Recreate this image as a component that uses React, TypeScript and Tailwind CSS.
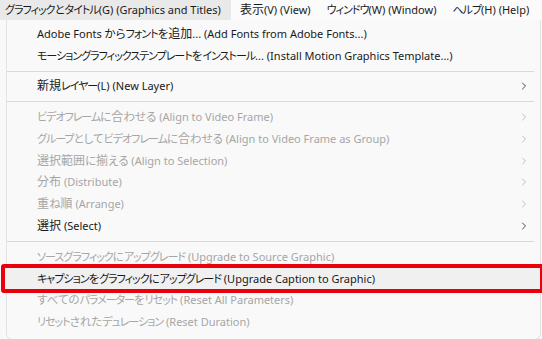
import { ChevronRight } from "lucide-react";

type Item =
  | { kind: "sep" }
  | { kind: "item"; label: string; disabled?: boolean; sub?: boolean; marked?: boolean };

const items: Item[] = [
  { kind: "item", label: "Adobe Fonts からフォントを追加... (Add Fonts from Adobe Fonts...)" },
  { kind: "item", label: "モーショングラフィックステンプレートをインストール... (Install Motion Graphics Template...)" },
  { kind: "sep" },
  { kind: "item", label: "新規レイヤー(L) (New Layer)", sub: true },
  { kind: "sep" },
  { kind: "item", label: "ビデオフレームに合わせる (Align to Video Frame)", disabled: true, sub: true },
  { kind: "item", label: "グループとしてビデオフレームに合わせる (Align to Video Frame as Group)", disabled: true, sub: true },
  { kind: "item", label: "選択範囲に揃える (Align to Selection)", disabled: true, sub: true },
  { kind: "item", label: "分布 (Distribute)", disabled: true, sub: true },
  { kind: "item", label: "重ね順 (Arrange)", disabled: true, sub: true },
  { kind: "item", label: "選択 (Select)", sub: true },
  { kind: "sep" },
  { kind: "item", label: "ソースグラフィックにアップグレード (Upgrade to Source Graphic)", disabled: true },
  { kind: "item", label: "キャプションをグラフィックにアップグレード (Upgrade Caption to Graphic)", marked: true },
  { kind: "item", label: "すべてのパラメーターをリセット (Reset All Parameters)", disabled: true },
  { kind: "item", label: "リセットされたデュレーション (Reset Duration)", disabled: true },
];

const menus = [
  "グラフィックとタイトル(G) (Graphics and Titles)",
  "表示(V) (View)",
  "ウィンドウ(W) (Window)",
  "ヘルプ(H) (Help)",
];

function Label({ text }: { text: string }) {
  const parts = text.split(/([\u30a0-\u30ff]+|[\u3040-\u309f]+|[\u4e00-\u9fff]+)/).filter(Boolean);
  return (
    <span className="whitespace-pre">
      {parts.map((p, i) => {
        if (/^[\u30a0-\u30ff]/.test(p))
          return (
            <span key={i} className="tracking-[-1px]">
              {p}
            </span>
          );
        if (/^[\u3040-\u309f]/.test(p))
          return (
            <span key={i} className="text-[11.5px]">
              {p}
            </span>
          );
        if (/^[\u4e00-\u9fff]/.test(p))
          return (
            <span key={i} className="text-[12px]">
              {p}
            </span>
          );
        return <span key={i}>{p}</span>;
      })}
    </span>
  );
}

export default function App() {
  return (
    <div
      className="w-[542px] h-[339px] overflow-hidden bg-[#f9f9f9] text-[11px] text-[#1a1a1a] [font-feature-settings:'palt']"
      style={{ fontFamily: '"Noto Sans", "Noto Sans CJK JP", sans-serif' }}
    >
      {/* Menu bar */}
      <div className="flex h-[20px] items-center bg-[#fbfbfb]">
        {menus.map((m, i) => (
          <div
            key={m}
            className={`flex h-full items-center whitespace-nowrap ${
              i === 0 ? "bg-[#e9e9e9] pl-[5px] pr-[10px] mr-[1px]" : "px-[8px]"
            }`}
          >
            <Label text={m} />
          </div>
        ))}
      </div>

      {/* Dropdown */}
      <div className="relative ml-[6px] w-[535px] rounded-b-[6px] border border-t-0 border-[#e3e3e3] bg-[#f9f9f9] pt-[3px] pb-[6px]">
        {items.map((it, i) =>
          it.kind === "sep" ? (
            <div key={i} className="py-[4px] pr-[6px]">
              <div className="h-px bg-[#d9d9d9]" />
            </div>
          ) : (
            <div key={i} className="relative h-[21.75px]">
              {it.marked && (
                <div className="absolute -left-[6px] -right-[4px] -top-[4px] -bottom-[4px] rounded-[3px] border-[4px] border-[#e8000b] bg-[#f0f0f0]" />
              )}
              <div
                className={`relative flex h-full items-center pl-[30px] pr-[10px] whitespace-nowrap ${
                  it.disabled ? "text-[#a6a6a6]" : "text-[#1a1a1a]"
                }`}
              >
                <span className="flex-1">
                  <Label text={it.label} />
                </span>
                {it.sub && (
                  <ChevronRight
                    size={12}
                    strokeWidth={1.6}
                    className={it.disabled ? "text-[#b0b0b0]" : "text-[#1a1a1a]"}
                  />
                )}
              </div>
            </div>
          )
        )}
      </div>
    </div>
  );
}
